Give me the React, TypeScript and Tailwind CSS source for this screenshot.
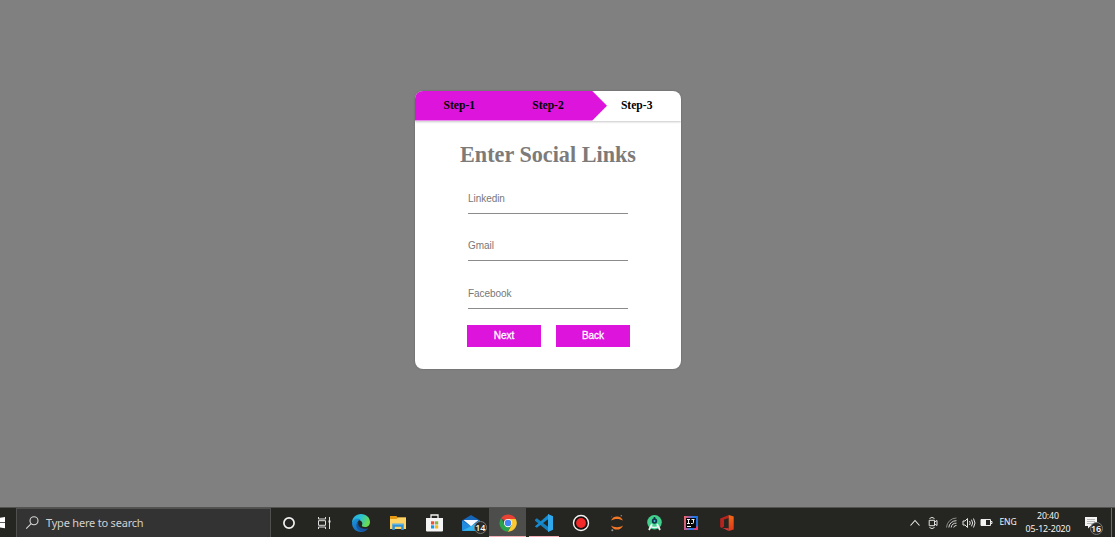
import type { ReactNode } from "react";

const fields = ["Linkedin", "Gmail", "Facebook"];

function Card() {
  return (
    <main className="flex h-[278px] w-[266px] flex-col overflow-hidden rounded-[8px] bg-white shadow-[0_0_2px_rgba(0,0,0,0.25)]">
      <div className="relative grid h-[29.5px] shrink-0 grid-cols-3 font-['Liberation_Serif',serif] text-[11.6px] font-bold leading-[29px] text-black shadow-[0_1px_2px_rgba(0,0,0,0.22)]">
        <svg className="absolute left-0 top-0" width="266" height="30" viewBox="0 0 266 30">
          <path d="M0 0H177.3L192 14.7L177.3 29.4H0Z" fill="#dc14dc" />
        </svg>
        <span className="relative text-center">Step-1</span>
        <span className="relative text-center">Step-2</span>
        <span className="relative text-center">Step-3</span>
      </div>
      <h1 className="mt-[21px] text-center font-['Liberation_Serif',serif] text-[22.2px] font-bold leading-[26px] text-[#7c7b7a]">
        Enter Social Links
      </h1>
      <form className="flex flex-col pl-[53px]" onSubmit={(e) => e.preventDefault()}>
        <div className="flex flex-col gap-[17.5px] pt-[16px]">
          {fields.map((name) => (
            <input
              key={name}
              placeholder={name}
              aria-label={name}
              className="h-[30px] w-[160px] border-b border-[#8b8b8b] bg-transparent text-[10px] tracking-[-0.05px] text-[#777] outline-none placeholder:text-[#777]"
            />
          ))}
        </div>
        <div className="-ml-px mt-[16px] flex gap-[15px]">
          <button className="h-[22px] w-[74px] bg-[#dc14dc] text-[10px] font-medium text-white [-webkit-text-stroke:0.3px_white]">Next</button>
          <button className="h-[22px] w-[74px] bg-[#dc14dc] text-[10px] font-medium text-white [-webkit-text-stroke:0.3px_white]">Back</button>
        </div>
      </form>
    </main>
  );
}

function Badge({ children, className }: { children: ReactNode; className: string }) {
  return (
    <span className={"absolute flex size-[13px] items-center justify-center rounded-full border border-[#777775] bg-[#292a28] font-['Open_Sans',sans-serif] text-[9px] font-semibold leading-none tracking-[-0.2px] text-white " + className}>
      {children}
    </span>
  );
}

function Cell({ children, active = false }: { children: ReactNode; active?: boolean }) {
  return (
    <div className={"relative flex h-[30px] w-[36.6px] shrink-0 items-center justify-center " + (active ? "bg-[#4d4e4b]" : "")}>
      {children}
    </div>
  );
}

function Edge() {
  return (
    <svg width="20" height="20" viewBox="0 0 20 20">
      <defs>
        <linearGradient id="edgeTop" x1="0" y1="0" x2="1" y2="0.4">
          <stop offset="0" stopColor="#24a6e4" />
          <stop offset="0.5" stopColor="#2bc3d2" />
          <stop offset="1" stopColor="#69dc52" />
        </linearGradient>
        <linearGradient id="edgeLow" x1="0" y1="0" x2="0.7" y2="1">
          <stop offset="0" stopColor="#1b96df" />
          <stop offset="1" stopColor="#1365b5" />
        </linearGradient>
      </defs>
      <path d="M1 10C1 4.500 5 1 10 1c5.400 0 9 3.700 9 8 0 3-2.100 5-5 5-2.300 0-3.700-.8-3-2 .6-1 .4-2.400-.5-3.500C8.200 5.700 3 6 1 10Z" fill="url(#edgeTop)" />
      <path d="M1 10c1-4 5.500-5.500 8.600-3.500C7 7 6 9.400 6.600 12c.7 3.400 5.100 5.400 9.700 4.100C14.900 18 12.600 19 10 19c-5.300 0-9-3.900-9-9Z" fill="url(#edgeLow)" />
      <path d="M7.500 8.500C5.700 12.500 10 17.500 17.200 15.200c-1.800 3.200-6 4-9 2.100-3.200-2-4.100-6.600-.7-8.800Z" fill="#1554a0" />
    </svg>
  );
}

function Folder() {
  return (
    <svg width="18" height="16" viewBox="0 0 18 16">
      <path d="M1 2.500V1h6.500l1.200 1.500H17V14H1Z" fill="#e49a12" />
      <path d="M1 4h6.500L9 2.500h8V14H1Z" fill="#ffd466" />
      <path d="M3.300 15V8.700h11.400V15h-2.500v-3.200H5.800V15Z" fill="#2d93db" />
      <path d="M3.300 8.700h11.400v1.100H3.300Z" fill="#66b7e7" />
    </svg>
  );
}

function Store() {
  return (
    <svg width="19" height="20" viewBox="0 0 19 20">
      <path d="M6 6V2h7v4" fill="none" stroke="#f3f3f3" strokeWidth="1.3" />
      <path d="M1 5h17v12.500q0 1-1 1H2q-1 0-1-1Z" fill="#f5f5f5" />
      <path d="M6 8.300h3.200v3.200H6Z" fill="#f05033" />
      <path d="M10 8.300h3.200v3.200H10Z" fill="#80b943" />
      <path d="M6 12.300h3.200v3.200H6Z" fill="#169de2" />
      <path d="M10 12.300h3.200v3.200H10Z" fill="#fcb813" />
    </svg>
  );
}

function Mail() {
  return (
    <svg width="20" height="18" viewBox="0 0 20 18">
      <path d="M1 6.500 10 1l9 5.500v10H1Z" fill="#1565b9" />
      <path d="m1 6.500 9 5.800 9-5.800v10.300H1Z" fill="#218be0" />
      <path d="m1 16.800 9-4.500 9-5.800v10.300Z" fill="#34b5ee" />
      <path d="M2.500 6h15L10 12.300Z" fill="#f5f8fa" />
    </svg>
  );
}

function Chrome() {
  return (
    <svg width="18" height="18" viewBox="0 0 48 48">
      <path d="M24 24 5.800 10.500A23 23 0 0 1 44.500 13H24Z" fill="#e94235" />
      <path d="M24 24V13h20.500A23 23 0 0 1 23.500 47L33.500 29.500Z" fill="#fcc934" />
      <path d="M5.800 10.500 14.500 29.500 24 35l9.500-5.500L23.500 47A23 23 0 0 1 5.800 10.500Z" fill="#2ba24c" />
      <circle cx="24" cy="24" r="11" fill="#fff" />
      <circle cx="24" cy="24" r="8.700" fill="#4285f4" />
    </svg>
  );
}

function VsCode() {
  return (
    <svg width="20" height="20" viewBox="0 0 20 20">
      <path d="m1 6.700 1.800-1.400L15 14.500V19L1 7.700Z" fill="#1680bf" />
      <path d="M1 13.300 15 1v4.500L2.800 14.700 1 13.500Z" fill="#178bd0" />
      <path d="m14 1 5 2.300v13.400L14 19Z" fill="#30a8eb" />
    </svg>
  );
}

function Recorder() {
  return (
    <svg width="18" height="18" viewBox="0 0 18 18">
      <circle cx="9" cy="9" r="7.500" fill="#17100f" stroke="#f3f3f3" strokeWidth="1.400" />
      <circle cx="9" cy="9" r="4.900" fill="#f32929" />
    </svg>
  );
}

function Jupyter() {
  return (
    <svg width="16" height="18" viewBox="0 0 16 18">
      <path d="M2 6.600C3 3.900 5.200 2.400 8 2.400s5 1.500 6 4.200C10.800 4.300 5.200 4.300 2 6.600Z" fill="#f37726" />
      <path d="M2 11.400c1 2.700 3.200 4.200 6 4.200s5-1.500 6-4.200c-3.200 2.300-8.800 2.300-12 0Z" fill="#f37726" />
      <circle cx="12.300" cy="1.700" r=".8" fill="#8a8a8a" />
      <circle cx="3.300" cy="16.300" r="1" fill="#999" />
      <circle cx="2.700" cy="2.700" r=".5" fill="#777" />
    </svg>
  );
}

function AndroidStudio() {
  return (
    <svg width="17" height="18" viewBox="0 0 17 18">
      <circle cx="8.500" cy="8.300" r="7.300" fill="#42d18d" />
      <path d="m6 10-3 6M11 10l3 6" stroke="#e5f6f2" strokeWidth="1.800" />
      <path d="M4.500 12.300q4 2.300 8 0" stroke="#e5f6f2" strokeWidth="1.500" fill="none" />
      <path d="M8.500 3v2" stroke="#12354b" strokeWidth="1.600" />
      <circle cx="8.500" cy="7" r="2.700" fill="#12354b" />
      <circle cx="8.500" cy="7" r="1" fill="#48b8d4" />
    </svg>
  );
}

function IntelliJ() {
  return (
    <svg width="16" height="16" viewBox="0 0 16 16">
      <defs>
        <linearGradient id="ij" x1="0" y1="0" x2="1" y2="0.2">
          <stop offset="0" stopColor="#f56b66" />
          <stop offset="0.35" stopColor="#aa5ba4" />
          <stop offset="0.65" stopColor="#2181ed" />
          <stop offset="1" stopColor="#2468d5" />
        </linearGradient>
      </defs>
      <path d="M1 1h14v14H1Z" fill="url(#ij)" />
      <path d="M10 15h5V10Z" fill="#ef386e" />
      <path d="M3 3h10v10H3Z" fill="#080808" />
      <path d="M4 4.500h3M5.500 4.500v4M4 8.500h3M8.500 4.500h3M10.500 4.500v3q0 1-1 1h-1.500M4 11.500h4" stroke="#f5f5f5" strokeWidth="1" fill="none" />
    </svg>
  );
}

function Office() {
  return (
    <svg width="16" height="18" viewBox="0 0 16 18">
      <defs>
        <linearGradient id="officeSide" x1="0" y1="0" x2="0" y2="1">
          <stop offset="0" stopColor="#f26a16" />
          <stop offset="1" stopColor="#dc371b" />
        </linearGradient>
      </defs>
      <path d="M1.200 4.400 9.700 1v3L5 5.600v7L3 14l-1.800-.8Z" fill="#b9231f" />
      <path d="m9.700 1 5 1.600v13L9.700 17Z" fill="url(#officeSide)" />
      <path d="m3.500 14 6.200.2V17Z" fill="#d33a36" />
    </svg>
  );
}

function Taskbar() {
  return (
    <footer className="flex h-[30px] shrink-0 items-center overflow-hidden border-t border-[#535452] bg-[#252621] font-['Noto_Sans',sans-serif] text-[#f4f4f4]">
      <div className="w-4 shrink-0">
        <svg width="6" height="16" viewBox="0 0 6 16">
          <path d="M0 2.700 5 2v5.200H0ZM0 8.100h5v5.200l-5-.7Z" fill="#fff" />
        </svg>
      </div>
      <div className="flex h-[30px] w-[254.500px] shrink-0 items-center border border-[#50514e] bg-[#333] pl-[8px]">
        <svg width="15" height="15" viewBox="0 0 15 15" fill="none" stroke="#d8d8d8" strokeWidth="1.100">
          <circle cx="9" cy="5.800" r="4" />
          <path d="m6.200 8.600-5 5" />
        </svg>
        <span className="ml-[6px] whitespace-nowrap text-[11px] leading-none tracking-[-0.200px] text-[#d1d1d1]">Type here to search</span>
      </div>
      <div className="flex w-9 shrink-0 justify-center">
        <svg width="14" height="14" viewBox="0 0 14 14">
          <circle cx="7" cy="7" r="5.100" fill="none" stroke="#f2f2f2" strokeWidth="1.700" />
        </svg>
      </div>
      <div className="mr-[1.5px] flex w-[35px] shrink-0 justify-center">
        <svg width="15" height="14" viewBox="0 0 15 14" fill="none" stroke="#dedede" strokeWidth="1">
          <path d="M1.500 1v2h7V1M1.500 13v-2h7v2M1.500 4.700h7v4.600h-7ZM12.500 1v12" />
          <path d="M11.500 4.500h2v2h-2Z" fill="#e8e8e8" stroke="none" />
        </svg>
      </div>
      <Cell><Edge /></Cell>
      <Cell><Folder /></Cell>
      <Cell><Store /></Cell>
      <Cell>
        <Mail />
        <Badge className="left-[21px] top-[13.500px]">14</Badge>
      </Cell>
      <Cell active>
        <Chrome />
        <span className="absolute bottom-0 left-0 h-[2px] w-full bg-[#f3adb4]" />
      </Cell>
      <Cell>
        <VsCode />
        <span className="absolute bottom-0 left-[3px] h-[2px] w-[30px] bg-[#f3adb4]" />
      </Cell>
      <Cell><Recorder /></Cell>
      <Cell><Jupyter /></Cell>
      <Cell><AndroidStudio /></Cell>
      <Cell><IntelliJ /></Cell>
      <Cell><Office /></Cell>
      <div className="ml-auto flex h-full shrink-0 items-center">
        <div className="flex w-[18px] justify-center">
          <svg width="12" height="10" viewBox="0 0 12 10" fill="none" stroke="#e8e8e8" strokeWidth="1.100"><path d="m1.500 7.500 4.500-5 4.500 5" /></svg>
        </div>
        <div className="flex w-[18px] justify-center">
          <svg width="12" height="14" viewBox="0 0 12 14" fill="none" stroke="#e2e2e2" strokeWidth="1">
            <path d="M2.500 2.500Q5 .3 7.500 2.500M2.500 11.500q2.500 2.200 5 0M2.200 4.300h5.300v5.400H2.200ZM7.500 6l2.500-1.500v5L7.500 8" />
          </svg>
        </div>
        <div className="flex w-[18px] justify-center">
          <svg width="13" height="13" viewBox="0 0 13 13" fill="none" strokeWidth="1">
            <path d="M1.500 11.500A10 10 0 0 1 11.500 2" stroke="#8a8a88" />
            <path d="M3.800 11.500A7.400 7.400 0 0 1 11.500 4.700M6.200 11.500a5 5 0 0 1 5.300-4.300M8.700 11.500a2.600 2.600 0 0 1 2.800-2" stroke="#d5d5d5" />
          </svg>
        </div>
        <div className="flex w-[17px] justify-center">
          <svg width="14" height="12" viewBox="0 0 14 12" fill="none" stroke="#e4e4e4" strokeWidth="1">
            <path d="M1 4h2l2.500-2.500v9L3 8H1Z" />
            <path d="M7.500 4q1.500 2 0 4M9.500 2.700q2.300 3.300 0 6.600M11.500 1.500q3 4.500 0 9" />
          </svg>
        </div>
        <div className="flex w-[19px] justify-center">
          <svg width="13" height="9" viewBox="0 0 13 9">
            <path d="M1 1.500h9.500v6H1ZM11 3.500h1v2h-1" fill="none" stroke="#ececec" />
            <path d="M1 1.500h5v6H1Z" fill="#f5f5f5" />
          </svg>
        </div>
        <span className="w-[24px] text-center text-[8.500px] tracking-[-0.1px]">ENG</span>
        <div className="flex w-[56px] flex-col items-center pt-px text-[8.800px] leading-[13.500px] tracking-[-0.100px]">
          <span>20:40</span>
          <span>05-12-2020</span>
        </div>
        <div className="relative flex h-full w-[35px] items-center pl-[8px]">
          <svg width="14" height="14" viewBox="0 0 14 14">
            <path d="M1 1h12v9H6.500L4 12.500V10H1Z" fill="#f4f4f4" />
            <path d="M3 3.500h8M3 5.500h8M3 7.500h6" stroke="#a1a1a0" strokeWidth=".7" />
          </svg>
          <Badge className="left-[13.500px] top-[13.500px]">16</Badge>
        </div>
        <span className="h-full w-[4px] border-l border-[#6b6c69]" />
      </div>
    </footer>
  );
}

export default function App() {
  return (
    <div className="flex h-[537px] w-[1115px] flex-col overflow-hidden bg-[#808080] font-['Liberation_Sans',sans-serif]">
      <div className="flex flex-1 items-start pl-[415px] pt-[91px]">
        <Card />
      </div>
      <Taskbar />
    </div>
  );
}
